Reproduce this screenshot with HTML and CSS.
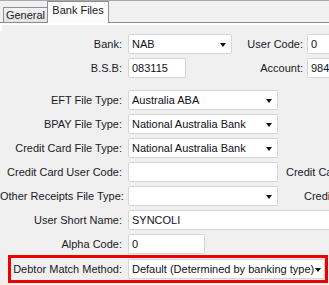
FILE: index.html
```html
<!DOCTYPE html>
<html>
<head>
<meta charset="utf-8">
<link rel="stylesheet" href="styles.css">
</head>
<body>
<div class="tabstrip">
  <div class="tab">General</div>
  <div class="tab active">Bank Files</div>
</div>
<div class="panel">
  <div class="nub"></div>
  <div class="row">
    <span class="lbl">Bank:</span>
    <span class="field combo w104">NAB<i class="arrow"></i></span>
    <span class="lbl2">User Code:</span>
    <span class="field edge">0</span>
  </div>
  <div class="row">
    <span class="lbl">B.S.B:</span>
    <span class="field w58">083115</span>
    <span class="lbl2 long">Account:</span>
    <span class="field edge">98494</span>
  </div>
  <div class="row sep">
    <span class="lbl">EFT File Type:</span>
    <span class="field combo w150">Australia ABA<i class="arrow"></i></span>
  </div>
  <div class="row">
    <span class="lbl">BPAY File Type:</span>
    <span class="field combo w150">National Australia Bank<i class="arrow"></i></span>
  </div>
  <div class="row">
    <span class="lbl">Credit Card File Type:</span>
    <span class="field combo w150">National Australia Bank<i class="arrow"></i></span>
  </div>
  <div class="row">
    <span class="lbl">Credit Card User Code:</span>
    <span class="field w150"></span>
    <span class="side">Credit Card Account:</span>
  </div>
  <div class="row">
    <span class="lbl">Other Receipts File Type:</span>
    <span class="field combo w150"><i class="arrow"></i></span>
    <span class="side far">Credit Card Type:</span>
  </div>
  <div class="row">
    <span class="lbl">User Short Name:</span>
    <span class="field edge">SYNCOLI</span>
  </div>
  <div class="row">
    <span class="lbl">Alpha Code:</span>
    <span class="field w77">0</span>
  </div>
  <div class="highlight">
    <div class="row inner">
      <span class="lbl">Debtor Match Method:</span>
      <span class="field combo w197">Default (Determined by banking type)<i class="arrow"></i></span>
    </div>
  </div>
</div>
</body>
</html>
```

FILE: styles.css
```css
html, body {
  margin: 0;
  padding: 0;
}
body {
  width: 329px;
  height: 285px;
  overflow: hidden;
  background: #f0f0f0;
  font-family: "Liberation Sans", Arial, sans-serif;
  font-size: 11px;
  color: #1a1a26;
}
.tabstrip {
  display: flex;
  align-items: flex-end;
  padding-left: 3px;
  border-top: 1px solid #a8a8a8;
  border-bottom: 1px solid #8c8e94;
  box-sizing: border-box;
  height: 23px;
}
.tab {
  width: 45px;
  height: 15px;
  box-sizing: border-box;
  display: flex;
  align-items: center;
  justify-content: center;
  border: 1px solid #8c8e94;
  border-bottom: none;
  background: linear-gradient(#f2f2f2, #e3e3e3);
}
.tab.active {
  width: 62px;
  height: 22px;
  background: #fcfcfc;
  margin-left: -1px;
  margin-bottom: -1px;
  position: relative;
  z-index: 1;
  align-items: flex-start;
  padding-top: 2px;
}
.panel {
  border-top: 2px solid #ffffff;
  padding-top: 7px;
  position: relative;
}
.nub {
  position: absolute;
  left: 0;
  top: 0;
  width: 2px;
  height: 6px;
  background: #ffffff;
}
.row {
  display: flex;
  align-items: center;
  height: 24px;
  white-space: nowrap;
}
.row.sep {
  margin-top: 8px;
}
.lbl {
  width: 122px;
  text-align: right;
  margin-right: 6px;
  flex: none;
}
.field {
  height: 20px;
  box-sizing: border-box;
  background: #ffffff;
  border: 1px solid #d6d6d6;
  border-radius: 1px;
  display: flex;
  align-items: center;
  padding-left: 3px;
  position: relative;
  flex: none;
  overflow: hidden;
  color: #101018;
}
.combo {
  padding-right: 16px;
}
.arrow {
  position: absolute;
  right: 5px;
  top: 8px;
  width: 0;
  height: 0;
  border-left: 3.5px solid transparent;
  border-right: 3.5px solid transparent;
  border-top: 4px solid #111111;
}
.w104 { width: 104px; }
.w58 { width: 58px; }
.w150 { width: 150px; }
.w77 { width: 77px; }
.w197 { width: 197px; padding-right: 0; overflow: visible; }
.w197 .arrow { right: 3px; }
.edge { width: 240px; }
.lbl2 {
  width: 71px;
  text-align: right;
  margin-right: 4px;
  flex: none;
}
.lbl2.long {
  width: 117px;
}
.side {
  margin-left: 8px;
}
.side.far {
  margin-left: 26px;
}
.highlight {
  margin-left: 8px;
  margin-top: -1px;
  width: 320px;
  height: 28px;
  box-sizing: border-box;
  border: 3px solid #ee0000;
}
.row.inner {
  height: 22px;
  margin-left: -11px;
}
```
